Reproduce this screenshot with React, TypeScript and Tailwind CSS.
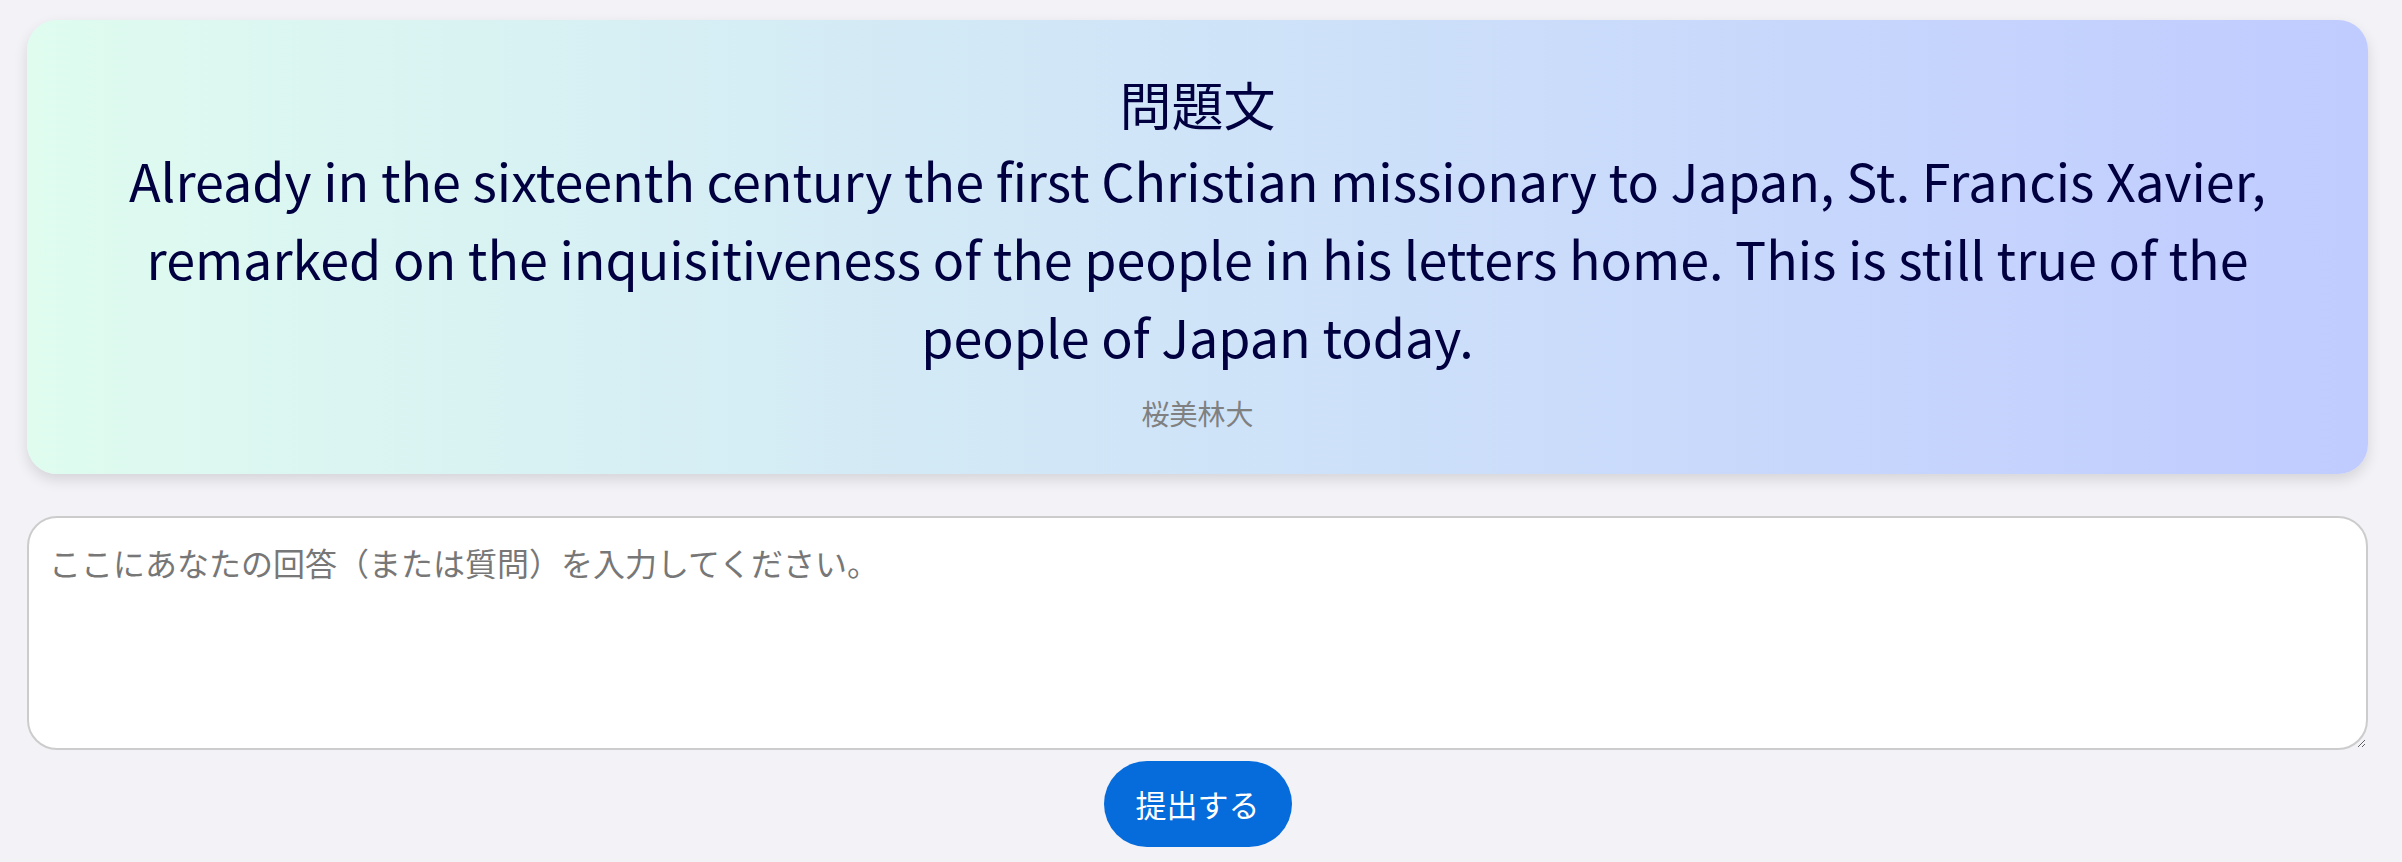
export default function App() {
  return (
    <div
      className="min-h-screen bg-[#f2f2f7] pt-[20px] pl-[27px] pr-[34px] pb-[15px]"
      style={{ fontFamily: '"Noto Sans CJK JP", "Noto Sans", sans-serif' }}
    >
      {/* ── Question card ───────────────────────────── */}
      <div className="rounded-[30px] bg-gradient-to-r from-[#dffcef] to-[#c0cbff] pt-[46px] pb-[40px] px-[60px] text-center shadow-[0_6px_14px_rgba(0,0,0,0.12)]">
        <h2 className="text-[52px] leading-[75px] text-[#000040]">問題文</h2>
        <p className="text-[52px] leading-[78px] text-[#000040]">
          Already in the sixteenth century the first Christian missionary to Japan, St. Francis Xavier,
          remarked on the inquisitiveness of the people in his letters home. This is still true of the
          people of Japan today.
        </p>
        <p className="mt-[17px] text-[28px] leading-[42px] text-[#808080]">桜美林大</p>
      </div>

      {/* ── Answer ───────────────────────────────────── */}
      <textarea
        placeholder="ここにあなたの回答（または質問）を入力してください。"
        className="mt-[42px] block w-full h-[234px] rounded-[30px] border-2 border-[#cccccc] bg-white px-[20px] pt-[21px] text-[32px] leading-[46px] text-[#000040] placeholder:text-[#777777] outline-none"
      />

      <div className="mt-[11px] flex justify-center">
        <button className="rounded-full bg-[#066bdb] px-[32px] py-[20px] text-[31px] leading-[46px] text-white">
          提出する
        </button>
      </div>
    </div>
  )
}
